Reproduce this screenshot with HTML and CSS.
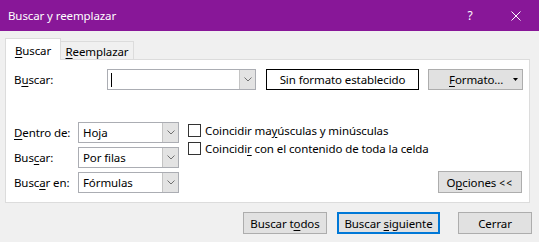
FILE: index.html
```html
<!DOCTYPE html>
<html lang="es">
<head>
<meta charset="utf-8">
<title>Buscar y reemplazar</title>
<link rel="stylesheet" href="styles.css">
</head>
<body>
<div class="titlebar">
  <span class="title">Buscar y reemplazar</span>
  <span class="tbtn help">?</span>
  <span class="tbtn close"><svg width="10" height="10" viewBox="0 0 10 10"><path d="M0.5 0.5 L9.5 9.5 M9.5 0.5 L0.5 9.5" stroke="#fff" stroke-width="1" fill="none"/></svg></span>
</div>
<div class="tabs">
  <div class="tab tab-active"><span><u>B</u>uscar</span></div>
  <div class="tab tab-inactive"><span><u>R</u>eemplazar</span></div>
</div>
<div class="panel">
  <div class="find-row">
    <div class="label-find">B<u>u</u>scar:</div>
    <div class="combo">
      <div class="combo-text"><span class="caret"></span></div>
      <div class="drop"><svg width="8" height="5" viewBox="0 0 8 5"><polyline points="0.5,0.5 4,4 7.5,0.5" stroke="#707070" stroke-width="1" fill="none"/></svg></div>
    </div>
    <div class="noformat">Sin formato establecido</div>
    <div class="btn formato"><span><u>F</u>ormato...</span><svg class="tri" width="5" height="3" viewBox="0 0 5 3"><polygon points="0,0 5,0 2.5,3" fill="#000"/></svg></div>
  </div>
  <div class="options">
    <div class="selects">
      <div class="sel-label"><u>D</u>entro de:</div>
      <div class="sel"><div class="sel-text">Hoja</div><div class="drop"><svg width="8" height="5" viewBox="0 0 8 5"><polyline points="0.5,0.5 4,4 7.5,0.5" stroke="#707070" stroke-width="1" fill="none"/></svg></div></div>
      <div class="sel-label">Bus<u>c</u>ar:</div>
      <div class="sel"><div class="sel-text">Por filas</div><div class="drop"><svg width="8" height="5" viewBox="0 0 8 5"><polyline points="0.5,0.5 4,4 7.5,0.5" stroke="#707070" stroke-width="1" fill="none"/></svg></div></div>
      <div class="sel-label">Busc<u>a</u>r en:</div>
      <div class="sel"><div class="sel-text">Fórmulas</div><div class="drop"><svg width="8" height="5" viewBox="0 0 8 5"><polyline points="0.5,0.5 4,4 7.5,0.5" stroke="#707070" stroke-width="1" fill="none"/></svg></div></div>
    </div>
    <div class="checks">
      <div class="check"><span class="box"></span><span>Coincidir ma<u>y</u>úsculas y minúsculas</span></div>
      <div class="check"><span class="box"></span><span>Coincidi<u>r</u> con el contenido de toda la celda</span></div>
    </div>
    <div class="btn opciones"><span>O<u>p</u>ciones <span class="lt">&lt;&lt;</span></span></div>
  </div>
</div>
<div class="footer">
  <div class="btn f-todos"><span>Buscar t<u>o</u>dos</span></div>
  <div class="btn f-sig"><span>Buscar <u>s</u>iguiente</span></div>
  <div class="btn f-cerrar"><span>Cerrar</span></div>
</div>
</body>
</html>
```
FILE: styles.css
```css
* { box-sizing: border-box; }
body {
  margin: 0;
  width: 539px;
  height: 242px;
  overflow: hidden;
  background: #f0f0f0;
  font-family: "Noto Sans", "Open Sans", sans-serif;
  font-size: 11.5px;
  letter-spacing: -0.1px;
  color: #000;
}
u { text-decoration-thickness: 1px; text-underline-offset: 2px; }
.titlebar {
  height: 31px;
  background: #881798;
  color: #fff;
  display: flex;
  align-items: center;
}
.title { flex: 1; padding-left: 8px; }
.tbtn {
  width: 46px;
  height: 31px;
  display: flex;
  align-items: center;
  justify-content: center;
}
.help { font-size: 12px; }
.tabs {
  display: flex;
  align-items: flex-end;
  height: 28px;
  padding-left: 5px;
}
.tab {
  border: 1px solid #dcdcdc;
  border-bottom: none;
  display: flex;
  align-items: center;
  justify-content: center;
  padding-top: 2px;
}
.tab-active {
  width: 56px;
  height: 22px;
  margin-bottom: -1px;
  background: #fff;
  position: relative;
  z-index: 1;
}
.tab-inactive {
  width: 73px;
  height: 18px;
  border-left: none;
  background: #f0f0f0;
}
.panel {
  margin-left: 5px;
  width: 525px;
  height: 144px;
  background: #fff;
  border: 1px solid #dcdcdc;
  padding: 9px 6px 0 8px;
}
.find-row { display: flex; height: 21px; }
.label-find { width: 93px; display: flex; align-items: center; }
.combo {
  width: 149px;
  border: 1px solid #abadb3;
  display: flex;
}
.combo-text { flex: 1; display: flex; align-items: center; padding-left: 3px; }
.caret { width: 1px; height: 14px; background: #000; }
.drop {
  width: 16px;
  background: #e3e3e3;
  border-left: 1px solid #c4c4c4;
  display: flex;
  align-items: center;
  justify-content: center;
}
.noformat {
  margin-left: 10px;
  width: 153px;
  border: 1px solid #000;
  display: flex;
  align-items: center;
  justify-content: center;
}
.btn {
  background: #e1e1e1;
  border: 1px solid #adadad;
  display: flex;
  align-items: center;
  justify-content: center;
  white-space: nowrap;
}
.formato {
  margin-left: 9px;
  width: 95px;
  justify-content: flex-start;
  padding-left: 20px;
}
.tri { margin-left: auto; margin-right: 4px; }
.options { display: flex; margin-top: 32px; }
.selects {
  display: grid;
  grid-template-columns: 64px 101px;
  grid-auto-rows: 21px;
  row-gap: 4px;
}
.sel-label { display: flex; align-items: center; white-space: nowrap; }
.sel { border: 1px solid #abadb3; display: flex; }
.sel-text { flex: 1; display: flex; align-items: center; padding-left: 4px; }
.checks { margin-left: 9px; display: flex; flex-direction: column; white-space: nowrap; }
.check { display: flex; align-items: flex-start; height: 18px; line-height: 18px; }
.box {
  width: 13px;
  height: 13px;
  border: 1px solid #333;
  background: #fff;
  margin-top: 2px;
  margin-right: 4px;
  flex: none;
}
.opciones {
  margin-left: auto;
  margin-right: 1px;
  align-self: flex-end;
  width: 84px;
  height: 22px;
}
.lt { font-size: 10px; letter-spacing: 1.5px; }
.footer {
  display: flex;
  justify-content: flex-end;
  margin-top: 9px;
  padding-right: 7px;
}
.footer .btn { height: 22px; }
.f-todos { width: 84px; }
.f-sig { width: 103px; margin-left: 10px; border: 2px solid #0078d7; }
.f-cerrar { width: 74px; margin-left: 18px; }
```
